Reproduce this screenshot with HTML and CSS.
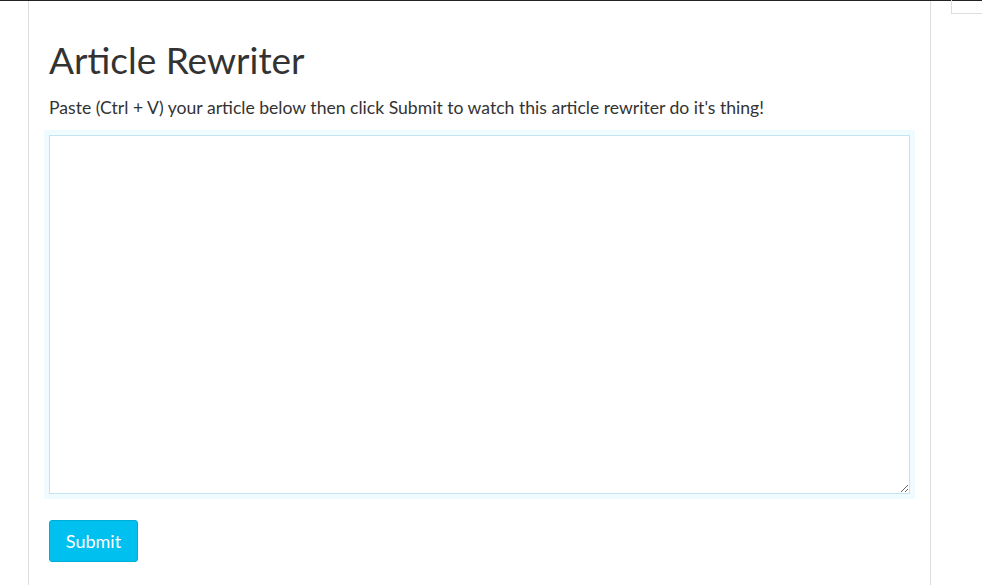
FILE: index.html
```html
<!DOCTYPE html>
<html lang="en">
<head>
    <meta charset="UTF-8">
    <title>Article Rewriter</title>
    <link rel="stylesheet" href="styles.css">
</head>
<body>

<div class="corner-box"></div>

<div class="page">
    <h1 class="page-title">Article Rewriter</h1>
    <p class="intro">Paste (Ctrl + V) your article below then click Submit to watch this article rewriter do it's thing!</p>

    <form class="rewriter-form">
        <textarea class="article-input" name="article"></textarea>
        <button type="button" class="btn-submit">Submit</button>
    </form>
</div>

</body>
</html>
```

FILE: styles.css
```css
* {
    box-sizing: border-box;
}

body {
    margin: 0;
    font-family: 'Lato', sans-serif;
    color: #333;
    background: #fff;
    border-top: 1px solid #222;
    min-height: 100vh;
}

.corner-box {
    position: absolute;
    top: 0;
    right: 0;
    width: 31px;
    height: 14px;
    border-left: 1px solid #ddd;
    border-bottom: 1px solid #ddd;
}

.page {
    margin-left: 28px;
    width: 903px;
    min-height: 584px;
    border-left: 1px solid #ddd;
    border-right: 1px solid #ddd;
    padding: 1px 19px 0 20px;
}

.page-title {
    font-size: 37px;
    font-weight: 400;
    margin: 38px 0 16px;
    line-height: 1.1;
}

.intro {
    font-size: 17.6px;
    margin: 0 0 17px;
}

.rewriter-form {
    display: flex;
    flex-direction: column;
    align-items: flex-start;
    gap: 26px;
}

.article-input {
    width: 861px;
    height: 359px;
    border: 1px solid #c4e5ef;
    box-shadow: 0 0 0 5px #f0fbff;
    outline: none;
    resize: vertical;
    font-family: inherit;
    font-size: 16px;
}

.btn-submit {
    background: #00c0ef;
    color: #fff;
    border: 1px solid #00acd6;
    border-radius: 3px;
    width: 89px;
    height: 42px;
    font-family: inherit;
    font-size: 18px;
    cursor: pointer;
}
```
